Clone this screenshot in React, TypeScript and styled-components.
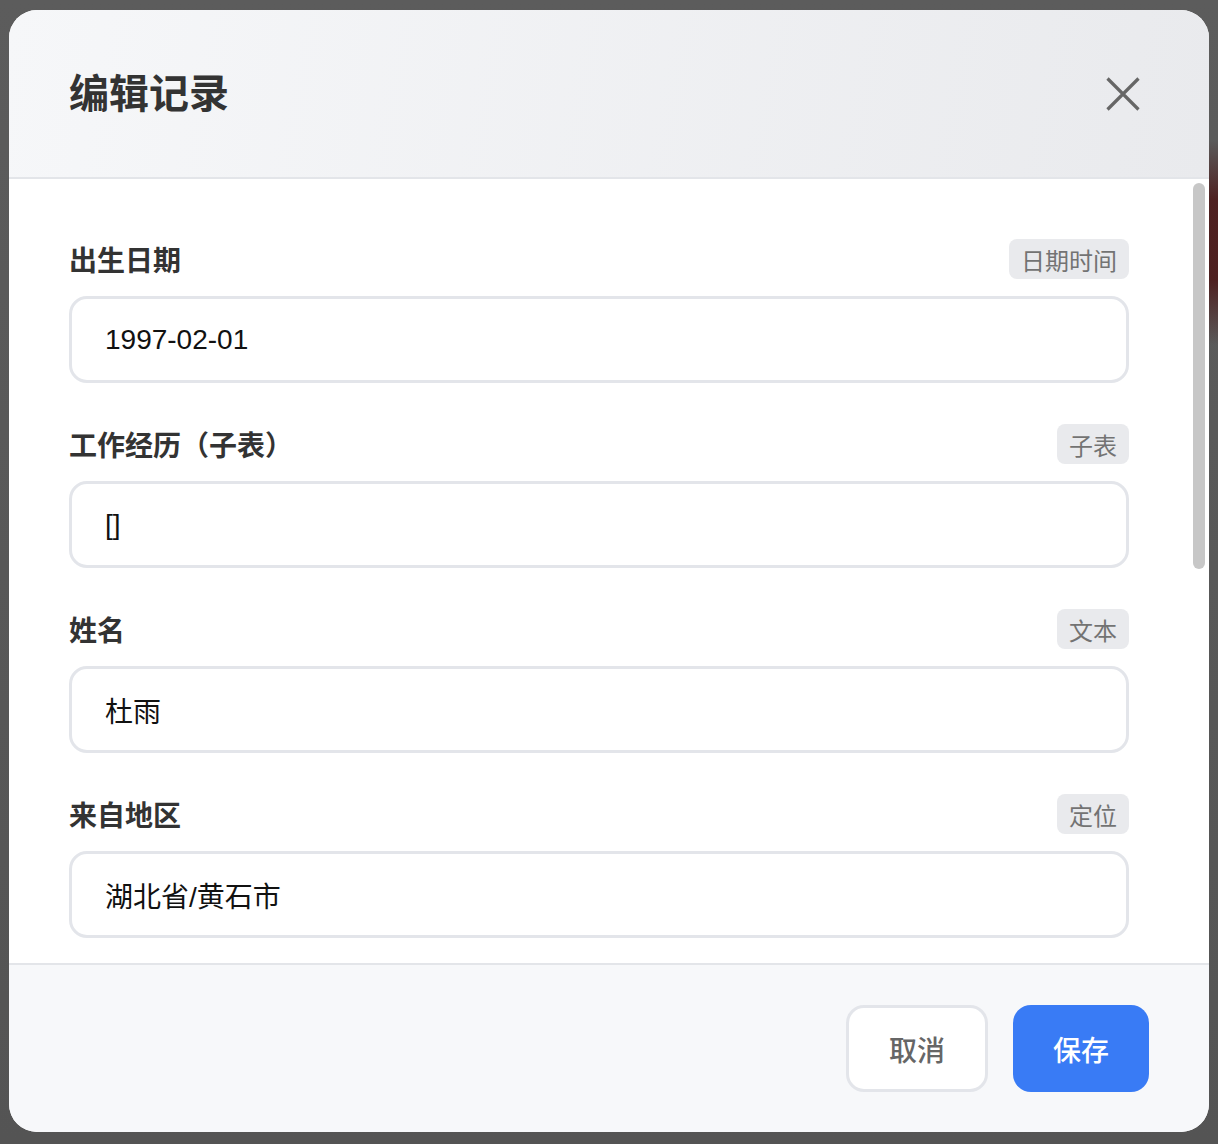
import React from "react";
import styled, { createGlobalStyle } from "styled-components";

const GlobalStyle = createGlobalStyle`
  html, body {
    margin: 0;
    padding: 0;
  }

  body {
    font-family: "Liberation Sans", "Noto Sans CJK SC", sans-serif;
    background:
      linear-gradient(
        to bottom,
        rgba(75, 18, 18, 0) 140px,
        rgba(75, 18, 18, 0.8) 200px,
        rgba(75, 18, 18, 0.8) 280px,
        rgba(75, 18, 18, 0) 345px
      ) right top / 24px 100% no-repeat,
      linear-gradient(to bottom, #5c5c5c, #545454);
  }
`;

const Backdrop = styled("div")`
  min-height: 1144px;
  box-sizing: border-box;
  padding: 10px 9px 12px;
  display: flex;
  justify-content: center;
`;

const Modal = styled("div")`
  width: 1200px;
  height: 1122px;
  display: flex;
  flex-direction: column;
  background: #fff;
  border-radius: 28px;
  overflow: hidden;
`;

const Header = styled("header")`
  flex: none;
  height: 169px;
  box-sizing: border-box;
  padding: 0 60px;
  display: flex;
  align-items: center;
  justify-content: space-between;
  background: linear-gradient(100deg, #f6f7f9 0%, #e9eaed 100%);
  border-bottom: 2px solid #e3e5e9;
`;

const Title = styled("h2")`
  margin: 0;
  font-size: 40px;
  font-weight: 700;
  color: #333;
  line-height: 48px;
`;

const CloseButton = styled("button")`
  width: 52px;
  height: 52px;
  padding: 0;
  border: none;
  background: transparent;
  display: flex;
  align-items: center;
  justify-content: center;
  color: #666;
  cursor: pointer;
`;

const BodyWrap = styled("div")`
  flex: 1;
  position: relative;
  overflow: hidden;
`;

const Body = styled("div")`
  height: 100%;
  box-sizing: border-box;
  overflow: hidden;
  padding: 60px 80px 60px 60px;
`;

/* drawn thumb of the body's scrollbar, it sits over the right gutter */
const ScrollThumb = styled("div")`
  position: absolute;
  top: 4px;
  right: 4px;
  width: 12px;
  height: 386px;
  border-radius: 6px;
  background: #c7c7c7;
`;

const Field = styled("div")`
  & + & {
    margin-top: 41px;
  }
`;

const LabelRow = styled("div")`
  height: 40px;
  margin-bottom: 17px;
  display: flex;
  align-items: center;
  justify-content: space-between;
`;

const Label = styled("label")`
  font-size: 28px;
  font-weight: 700;
  color: #333;
`;

const TypeBadge = styled("span")`
  height: 40px;
  padding: 0 12px;
  display: inline-flex;
  align-items: center;
  border-radius: 8px;
  background: #e9eaed;
  color: #737373;
  font-size: 24px;
`;

const Input = styled("input")`
  display: block;
  width: 100%;
  height: 87px;
  box-sizing: border-box;
  padding: 0 33px;
  border: 3px solid #e3e5ea;
  border-radius: 18px;
  background: #fff;
  font-family: "Liberation Sans", "Noto Sans CJK SC", sans-serif;
  font-size: 28px;
  color: #111;
  outline: none;
`;

const Footer = styled("footer")`
  flex: none;
  height: 169px;
  box-sizing: border-box;
  padding: 0 60px;
  display: flex;
  align-items: center;
  justify-content: flex-end;
  gap: 25px;
  background: #f7f8fa;
  border-top: 2px solid #e3e5e9;
`;

const Button = styled("button")<{ $primary?: boolean }>`
  height: 87px;
  box-sizing: border-box;
  padding: 0 40px;
  border-radius: 18px;
  font-family: "Liberation Sans", "Noto Sans CJK SC", sans-serif;
  font-size: 28px;
  font-weight: 500;
  cursor: pointer;
  border: ${({ $primary }) => ($primary ? "none" : "3px solid #e3e5ea")};
  background: ${({ $primary }) => ($primary ? "#397bf5" : "#fff")};
  color: ${({ $primary }) => ($primary ? "#fff" : "#666")};
`;

const fields = [
  { label: "出生日期", type: "日期时间", value: "1997-02-01" },
  { label: "工作经历（子表）", type: "子表", value: "[]" },
  { label: "姓名", type: "文本", value: "杜雨" },
  { label: "来自地区", type: "定位", value: "湖北省/黄石市" },
];

function CloseIcon() {
  return (
    <svg width="34" height="34" viewBox="0 0 34 34" fill="none">
      <path d="M1.5 1.5 L32.5 32.5 M32.5 1.5 L1.5 32.5" stroke="currentColor" strokeWidth="3.2" />
    </svg>
  );
}

function App() {
  return (
    <>
      <GlobalStyle />
      <Backdrop>
        <Modal>
          <Header>
            <Title>编辑记录</Title>
            <CloseButton aria-label="关闭">
              <CloseIcon />
            </CloseButton>
          </Header>
          <BodyWrap>
            <Body>
              {fields.map(field => (
                <Field key={field.label}>
                  <LabelRow>
                    <Label>{field.label}</Label>
                    <TypeBadge>{field.type}</TypeBadge>
                  </LabelRow>
                  <Input defaultValue={field.value} readOnly />
                </Field>
              ))}
            </Body>
            <ScrollThumb />
          </BodyWrap>
          <Footer>
            <Button>取消</Button>
            <Button $primary>保存</Button>
          </Footer>
        </Modal>
      </Backdrop>
    </>
  );
}

export default App;
